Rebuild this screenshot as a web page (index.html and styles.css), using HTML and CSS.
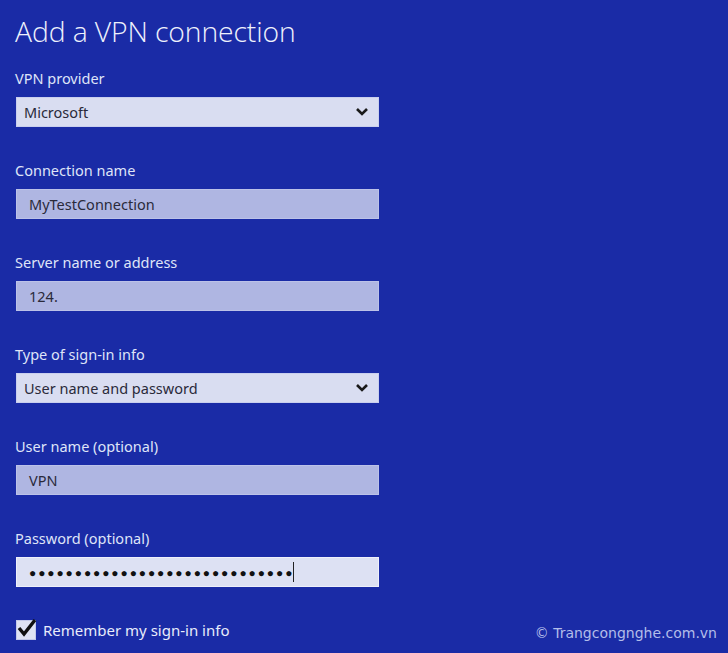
FILE: index.html
```html
<!DOCTYPE html>
<html lang="en">
<head>
  <meta charset="UTF-8">
  <meta name="viewport" content="width=device-width, initial-scale=1.0">
  <title>Add a VPN connection</title>
  <link rel="stylesheet" href="styles.css">
</head>
<body>
  <div class="panel">
    <h1>Add a VPN connection</h1>

    <div class="field">
      <label>VPN provider</label>
      <div class="box select">
        <span>Microsoft</span>
        <svg class="chev" width="14" height="10" viewBox="0 0 14 10"><polyline points="2,2 7,7 12,2" fill="none" stroke="#1a1a1a" stroke-width="2.6"/></svg>
      </div>
    </div>

    <div class="field">
      <label>Connection name</label>
      <div class="box text">MyTestConnection</div>
    </div>

    <div class="field">
      <label>Server name or address</label>
      <div class="box text">124.</div>
    </div>

    <div class="field">
      <label>Type of sign-in info</label>
      <div class="box select">
        <span>User name and password</span>
        <svg class="chev" width="14" height="10" viewBox="0 0 14 10"><polyline points="2,2 7,7 12,2" fill="none" stroke="#1a1a1a" stroke-width="2.6"/></svg>
      </div>
    </div>

    <div class="field">
      <label>User name (optional)</label>
      <div class="box text">VPN</div>
    </div>

    <div class="field">
      <label>Password (optional)</label>
      <div class="box text focus"><span class="dots">●●●●●●●●●●●●●●●●●●●●●●●●●●●●●</span><span class="caret"></span></div>
    </div>

    <div class="check">
      <span class="tick">
        <svg width="24" height="22" viewBox="0 0 24 22"><polyline points="4,11 9,17 20,3" fill="none" stroke="#111" stroke-width="3.4"/></svg>
      </span>
      <span>Remember my sign-in info</span>
    </div>
  </div>
  <div class="mark">© Trangcongnghe.com.vn</div>
</body>
</html>
```

FILE: styles.css
```css
html, body { height: 100%; }
body { margin: 0; background: #1a2ba6; color: #e6eafa; font-family: "Noto Sans", "Open Sans", sans-serif; overflow: hidden; position: relative; }
.panel { padding: 0 0 0 15px; width: 364px; }
h1 { font-family: "Open Sans", "Noto Sans", sans-serif; font-weight: 300; font-size: 28.3px; color: #eef1fc; margin: 0; padding-top: 12px; height: 56px; letter-spacing: -0.1px; }
.field { margin-bottom: 33px; }
.field label { display: block; font-size: 14.5px; line-height: 20px; height: 20px; margin-bottom: 9px; color: #dfe4f8; }
.box { box-sizing: border-box; height: 30px; margin-left: 1px; border: 1px solid #c9cfee; display: flex; align-items: center; font-size: 14.5px; color: #2a2a3a; }
.select { background: #d9ddf1; padding: 0 9px 0 7px; justify-content: space-between; }
.text { background: #afb6e2; border-color: #bcc2e8; padding-left: 12px; }
.text.focus { background: #dde1f3; border-color: #eef0fa; }
.dots { font-size: 12px; letter-spacing: 1.9px; color: #111; }
.caret { width: 1px; height: 20px; background: #222; margin-left: -1px; }
.check { display: flex; align-items: center; gap: 7px; margin-top: 0; font-size: 15px; color: #e8ecfb; }
.tick { position: relative; box-sizing: border-box; width: 20px; height: 20px; margin-left: 1px; background: #dfe3f4; border: 1px solid #c3c9ea; }
.tick svg { position: absolute; left: -2px; top: -4px; }
.mark { position: absolute; right: 11px; bottom: 12px; font-family: "DejaVu Sans", sans-serif; font-size: 14px; color: #b3bde9; }
```
